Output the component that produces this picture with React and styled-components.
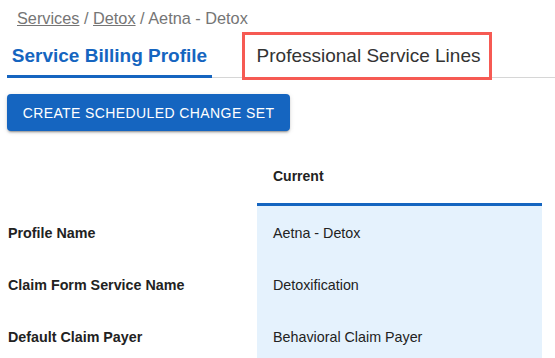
import React from "react";
import styled, { createGlobalStyle } from "styled-components";

const Global = createGlobalStyle`
  html, body { margin: 0; padding: 0; background: #fff; }
  body { font-family: "Liberation Sans", Arial, sans-serif; overflow: hidden; }
`;

const Page = styled.div`
  width: 555px;
  height: 358px;
  overflow: hidden;
  padding: 0 0 0 7px;
  box-sizing: border-box;
`;

const Breadcrumbs = styled.div`
  padding: 8px 0 0 10px;
  height: 20px;
  font-size: 16.3px;
  line-height: 20px;
  color: #757575;
`;

const Crumb = styled.a`
  color: #757575;
  text-decoration: underline;
`;

const TabBar = styled.div`
  display: flex;
  align-items: stretch;
  height: 48px;
  border-bottom: 1px solid #d6d6d6;
  margin-top: 1px;
`;

const Tab = styled.div`
  position: relative;
  display: flex;
  align-items: center;
  justify-content: center;
  width: ${(p) => p.$w}px;
  margin-right: ${(p) => p.$mr || 0}px;
  font-size: 19px;
  font-weight: ${(p) => (p.$active ? 700 : 400)};
  color: ${(p) => (p.$active ? "#1565c0" : "#333")};
  padding-top: 5px;
  white-space: nowrap;
  box-sizing: border-box;
  ${(p) =>
    p.$active &&
    `&::after {
      content: "";
      position: absolute;
      left: 0; right: 0; bottom: -1px;
      height: 3px;
      background: #1565c0;
    }`}
`;

const Highlight = styled.div`
  position: absolute;
  left: -15px;
  right: -12px;
  top: 3px;
  bottom: -3px;
  border: 3px solid #f65a53;
  pointer-events: none;
`;

const Toolbar = styled.div`
  padding: 16px 0 0 0;
`;

const Button = styled.button`
  width: 283px;
  height: 37px;
  border: none;
  border-radius: 4px;
  background: #1565c0;
  color: #fff;
  font-family: "Liberation Sans", Arial, sans-serif;
  font-size: 14px;
  letter-spacing: 0.4px;
  text-transform: uppercase;
  box-shadow: 0 3px 1px -2px rgba(0,0,0,0.2), 0 2px 2px 0 rgba(0,0,0,0.14), 0 1px 5px 0 rgba(0,0,0,0.12);
  padding: 0;
`;

const Table = styled.div`
  margin-top: 23px;
  display: grid;
  grid-template-columns: 250px 285px;
  grid-auto-rows: 52px;
`;

const HeadCell = styled.div`
  height: 52px;
  display: flex;
  align-items: center;
  padding: 0 0 6px 16px;
  font-size: 14px;
  font-weight: 700;
  color: #222;
  box-sizing: border-box;
  ${(p) => p.$current && `border-bottom: 3px solid #1565c0;`}
`;

const Label = styled.div`
  display: flex;
  align-items: center;
  padding: 2px 0 0 1px;
  font-size: 14.3px;
  font-weight: 700;
  color: #222;
`;

const Value = styled.div`
  display: flex;
  align-items: center;
  padding: 1px 0 0 16px;
  font-size: 14.3px;
  color: #222;
  background: #e5f2fd;
`;

const rows = [
  ["Profile Name", "Aetna - Detox"],
  ["Claim Form Service Name", "Detoxification"],
  ["Default Claim Payer", "Behavioral Claim Payer"],
];

export default function App() {
  return (
    <Page>
      <Global />
      <Breadcrumbs>
        <Crumb>Services</Crumb> / <Crumb>Detox</Crumb> / Aetna - Detox
      </Breadcrumbs>
      <TabBar>
        <Tab $active $w={205} $mr={45}>Service Billing Profile</Tab>
        <Tab $w={223}>
          Professional Service Lines
          <Highlight />
        </Tab>
      </TabBar>
      <Toolbar>
        <Button>Create Scheduled Change Set</Button>
      </Toolbar>
      <Table>
        <HeadCell />
        <HeadCell $current>Current</HeadCell>
        {rows.map(([l, v]) => (
          <React.Fragment key={l}>
            <Label>{l}</Label>
            <Value>{v}</Value>
          </React.Fragment>
        ))}
      </Table>
    </Page>
  );
}
